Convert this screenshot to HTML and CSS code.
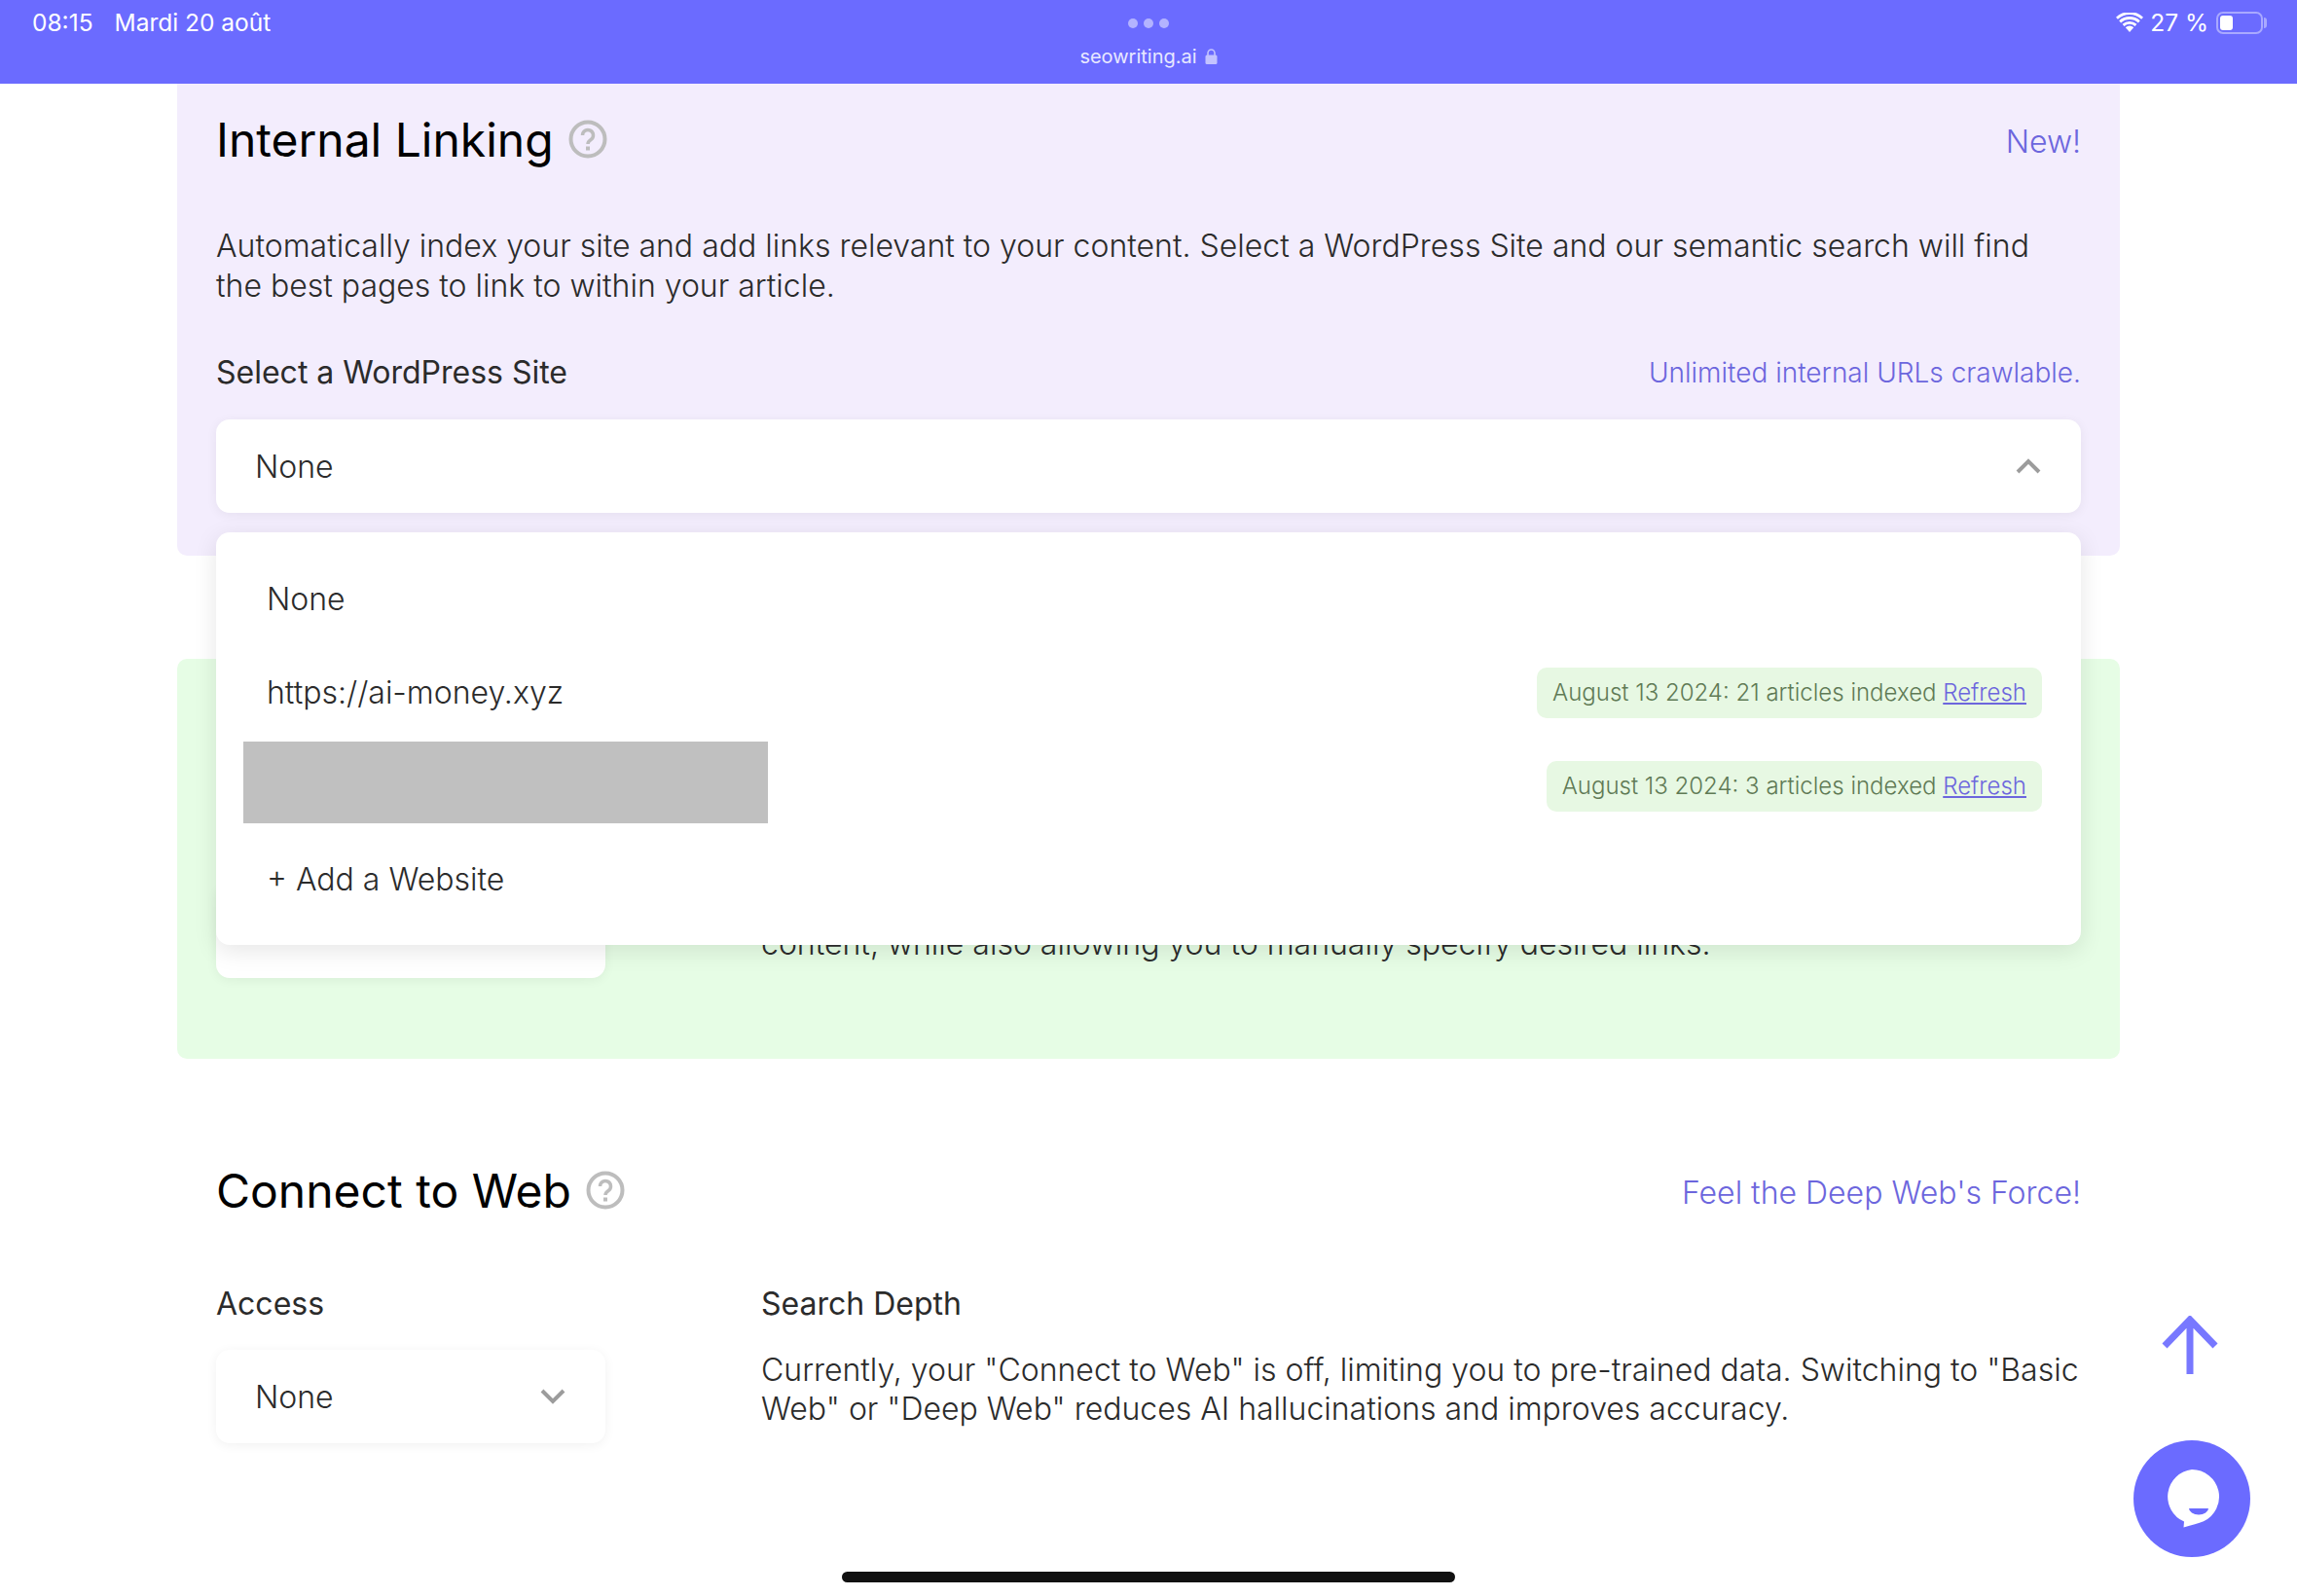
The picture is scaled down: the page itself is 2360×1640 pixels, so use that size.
FILE: index.html
```html
<!DOCTYPE html>
<html>

<head>
    <title>SEO Writing</title>
    <meta name="viewport" content="width=device-width, initial-scale=1.0">
    <link rel="stylesheet" href="styles.css">
</head>

<body>
    <div class="status-bar">
        <div class="status-left">
            <span>08:15</span>
            <span>Mardi 20 août</span>
        </div>
        <div class="status-center">
            <div class="dots"><i></i><i></i><i></i></div>
            <div class="url">
                <span>seowriting.ai</span>
                <svg class="lock" viewBox="0 0 13 16" width="13" height="16">
                    <path d="M3 7V4.5a3.5 3.5 0 0 1 7 0V7" fill="none" stroke="#c3c3ff" stroke-width="1.6" />
                    <rect x="0.5" y="6.5" width="12" height="9.5" rx="1.5" fill="#c3c3ff" />
                </svg>
            </div>
        </div>
        <div class="status-right">
            <svg viewBox="0 0 28 20" width="28" height="20">
                <path d="M14 20 L9.8 15.2 a6.2 6.2 0 0 1 8.4 0 Z" fill="#fff" />
                <path d="M6.6 11.8 a11 11 0 0 1 14.8 0 l-1.9 2.1 a8.2 8.2 0 0 0 -11 0 Z" fill="#fff" />
                <path d="M3.2 8.3 a16 16 0 0 1 21.6 0 l-1.9 2.1 a13.2 13.2 0 0 0 -17.8 0 Z" fill="#fff" />
                <path d="M0 4.7 a20.5 20.5 0 0 1 28 0 l-1.9 2.1 a17.7 17.7 0 0 0 -24.2 0 Z" fill="#fff" />
            </svg>
            <span>27 %</span>
            <div class="battery"><div class="battery-fill"></div></div>
        </div>
    </div>

    <div class="page">
        <section class="panel panel-internal">
            <div class="panel-head">
                <h2>Internal Linking</h2>
                <svg class="help" viewBox="0 0 40 40" width="40" height="40">
                    <circle cx="20" cy="20" r="17.5" fill="none" stroke="#bdbdbd" stroke-width="4" />
                    <path d="M14.5 16a5.5 5.5 0 1 1 8.6 4.5c-2 1.4-3.1 2.3-3.1 4.5" fill="none" stroke="#bdbdbd" stroke-width="3.5" />
                    <rect x="18" y="27.5" width="4" height="4" fill="#bdbdbd" />
                </svg>
                <span class="accent head-note">New!</span>
            </div>
            <p class="desc">Automatically index your site and add links relevant to your content. Select a WordPress Site and our semantic search will find the best pages to link to within your article.</p>
            <div class="label-row">
                <span class="label">Select a WordPress Site</span>
                <span class="accent accent-small">Unlimited internal URLs crawlable.</span>
            </div>
            <div class="select">
                <span>None</span>
                <svg class="chevron" viewBox="0 0 26 16" width="26" height="16">
                    <path d="M2 14 L13 3 L24 14" fill="none" stroke="#9c9c9c" stroke-width="4" />
                </svg>
            </div>
            <div class="menu">
                <div class="menu-row">None</div>
                <div class="menu-row">
                    <span>https://ai-money.xyz</span>
                    <span class="badge">August 13 2024: 21 articles indexed <a href="#">Refresh</a></span>
                </div>
                <div class="menu-row">
                    <div class="redacted"></div>
                    <span class="badge">August 13 2024: 3 articles indexed <a href="#">Refresh</a></span>
                </div>
                <div class="menu-row">+ Add a Website</div>
            </div>
        </section>

        <section class="panel panel-green">
            <div class="split">
                <div class="select select-small"></div>
                <p class="green-text">content, while also allowing you to manually specify desired links.</p>
            </div>
        </section>

        <section class="panel panel-web">
            <div class="panel-head">
                <h2>Connect to Web</h2>
                <svg class="help" viewBox="0 0 40 40" width="40" height="40">
                    <circle cx="20" cy="20" r="17.5" fill="none" stroke="#bdbdbd" stroke-width="4" />
                    <path d="M14.5 16a5.5 5.5 0 1 1 8.6 4.5c-2 1.4-3.1 2.3-3.1 4.5" fill="none" stroke="#bdbdbd" stroke-width="3.5" />
                    <rect x="18" y="27.5" width="4" height="4" fill="#bdbdbd" />
                </svg>
                <span class="accent head-note">Feel the Deep Web's Force!</span>
            </div>
            <div class="split split-web">
                <div>
                    <div class="label">Access</div>
                    <div class="select select-small">
                        <span>None</span>
                        <svg class="chevron" viewBox="0 0 26 16" width="26" height="16">
                            <path d="M2 2 L13 13 L24 2" fill="none" stroke="#9c9c9c" stroke-width="4" />
                        </svg>
                    </div>
                </div>
                <div>
                    <div class="label">Search Depth</div>
                    <p class="web-text">Currently, your "Connect to Web" is off, limiting you to pre-trained data. Switching to "Basic Web" or "Deep Web" reduces AI hallucinations and improves accuracy.</p>
                </div>
            </div>
        </section>
    </div>

    <svg class="to-top" viewBox="0 0 58 60" width="58" height="60">
        <path d="M3 31 L29 4 L55 31 M29 4 V60" fill="none" stroke="#7878ff" stroke-width="7" />
    </svg>
    <div class="chat-button">
        <svg viewBox="0 0 60 64" width="60" height="64">
            <path d="M30 2a28 28 0 0 1 12 53.3c-5 2-12 4-20.500 6.200l.5-6A28 28 0 0 1 30 2z" fill="#fff" />
            <path d="M27 42h20a10 6.5 0 0 1 -20 0z" fill="#6b6bff" />
        </svg>
    </div>
    <div class="home-bar"></div>
</body>

</html>
```

FILE: styles.css
```css
body {
    font-family: "Inter", sans-serif;
    font-weight: 300;
    font-size: 32px;
    color: #2b2b2b;
    background-color: #fff;
    margin: 0;
    height: 1640px;
    overflow: hidden;
}

.status-bar {
    display: flex;
    justify-content: space-between;
    height: 86px;
    padding: 0 35px 0 33px;
    background-color: #6b6bff;
    color: #fff;
    font-size: 24.5px;
    font-weight: 400;
    position: relative;
}

.status-left {
    display: flex;
    gap: 22px;
    height: 46px;
    align-items: center;
}

.status-center {
    position: absolute;
    left: 0;
    right: 0;
    top: 19px;
    display: flex;
    flex-direction: column;
    align-items: center;
}

.dots {
    display: flex;
    gap: 6px;
}

.dots i {
    width: 10px;
    height: 10px;
    border-radius: 50%;
    background-color: #b3b3ff;
}

.url {
    display: flex;
    align-items: center;
    gap: 8px;
    margin-top: 14px;
    font-size: 20px;
    line-height: 30px;
    color: #e8e8ff;
}

.status-right {
    display: flex;
    align-items: center;
    gap: 7px;
    height: 46px;
}

.battery {
    position: relative;
    width: 48px;
    height: 23px;
    margin-left: 1px;
    padding: 2px;
    border: 2px solid #a9a9ff;
    border-radius: 7px;
    box-sizing: border-box;
}

.battery::after {
    content: "";
    position: absolute;
    right: -6px;
    top: 4px;
    width: 3px;
    height: 11px;
    border-radius: 0 3px 3px 0;
    background-color: #a9a9ff;
}

.battery-fill {
    width: 13px;
    height: 100%;
    background-color: #fff;
    border-radius: 3px;
}

.page {
    padding: 0 182px;
}

.panel {
    padding: 0 40px;
    position: relative;
}

.panel-internal {
    height: 485px;
    box-sizing: border-box;
    padding-top: 30px;
    background-color: #f3edfd;
    border-radius: 0 0 10px 10px;
}

.panel-head {
    display: flex;
    align-items: center;
    height: 56px;
}

h2 {
    margin: -2px 0 0;
    font-size: 48px;
    font-weight: 400;
    color: #000;
}

.help {
    margin: -2px 0 0 15px;
}

.head-note {
    margin: 2px 0 0 auto;
}

.accent {
    color: #6c66dd;
}

.accent-small {
    font-size: 28px;
}

.desc {
    margin: 60px 0 0;
    line-height: 41px;
}

.label-row {
    display: flex;
    justify-content: space-between;
    align-items: center;
    margin-top: 48px;
    height: 41px;
}

.label {
    font-weight: 400;
    line-height: 41px;
}

.select {
    display: flex;
    justify-content: space-between;
    align-items: center;
    height: 96px;
    margin-top: 28px;
    padding: 0 40px;
    box-sizing: border-box;
    background-color: #fff;
    border-radius: 14px;
    box-shadow: 0 2px 12px rgba(0, 0, 0, 0.06);
}

.chevron {
    margin-right: 1px;
}

.menu {
    position: absolute;
    left: 40px;
    right: 40px;
    top: 461px;
    z-index: 2;
    padding: 20px 40px 20px 52px;
    background-color: #fff;
    border-radius: 14px;
    box-shadow: 0 6px 24px rgba(0, 0, 0, 0.1);
}

.menu-row {
    display: flex;
    justify-content: space-between;
    align-items: center;
    height: 96px;
}

.redacted {
    width: 539px;
    height: 84px;
    margin: 2px 0 8px -24px;
    background-color: #c0c0c0;
}

.badge {
    margin-top: 2px;
    padding: 0 16px;
    line-height: 52px;
    font-size: 24px;
    color: #5f7a55;
    background-color: #e7f8e3;
    border-radius: 10px;
}

.badge a {
    color: #6c66dd;
}

.panel-green {
    height: 411px;
    box-sizing: border-box;
    margin-top: 106px;
    padding-top: 232px;
    background-color: #e6fde5;
    border-radius: 10px;
}

.split {
    display: flex;
    gap: 160px;
}

.split .select-small {
    width: 400px;
    flex-shrink: 0;
}

.panel-green .select-small {
    margin-top: 0;
}

.green-text {
    margin: 41px 0 0;
    line-height: 40px;
}

.panel-web {
    padding-top: 108px;
}

.split-web {
    margin-top: 67px;
}

.split-web .select-small {
    margin-top: 27px;
}

.web-text {
    margin: 28px 0 0;
    line-height: 40px;
}

.to-top {
    position: fixed;
    left: 2221px;
    top: 1352px;
}

.chat-button {
    position: fixed;
    left: 2192px;
    top: 1480px;
    width: 120px;
    height: 120px;
    border-radius: 50%;
    background-color: #6b6bff;
    display: flex;
    justify-content: center;
    align-items: center;
}

.home-bar {
    position: fixed;
    left: 865px;
    top: 1615px;
    width: 630px;
    height: 11px;
    border-radius: 6px;
    background-color: #111;
}
```
